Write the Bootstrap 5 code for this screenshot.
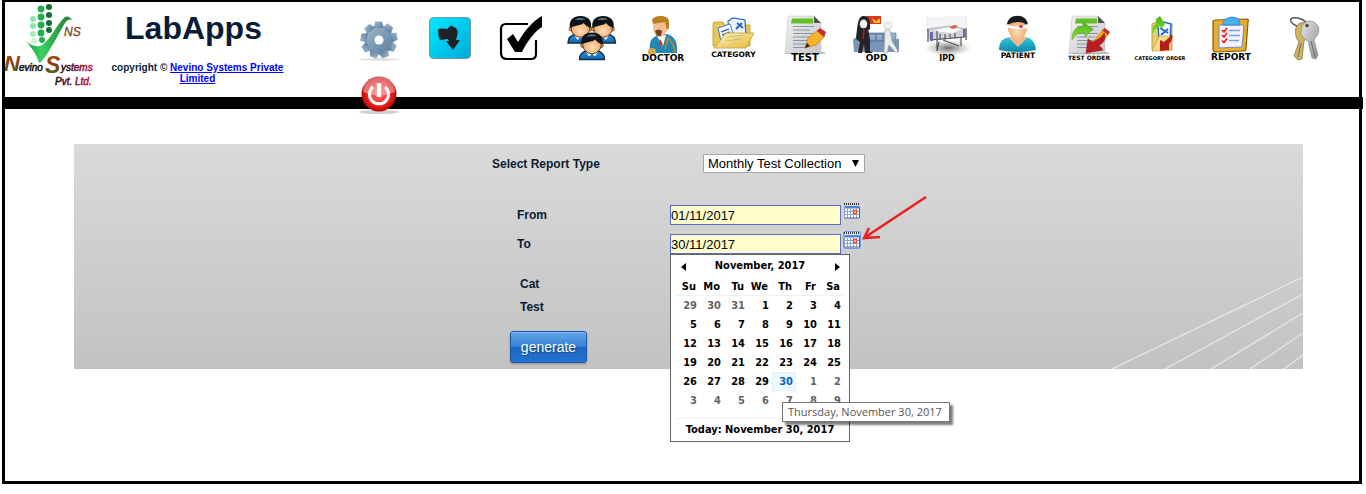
<!DOCTYPE html>
<html lang="en">
<head>
<meta charset="utf-8">
<meta name="viewport" content="width=device-width, initial-scale=1">
<title>LabApps</title>
<link href="https://cdn.jsdelivr.net/npm/bootstrap@5.3.0/dist/css/bootstrap.min.css" rel="stylesheet">
<style>
body{font-family:"Liberation Sans",Arial,sans-serif;font-size:12px;line-height:16px;color:#0a1c35;background:#fff}
.page-frame{margin:0 4px 10px 2px;border:3px solid #000;border-top-width:2px;min-height:calc(100vh - 10px)}
.top-bar{border-bottom:12px solid #000;margin-right:-4px}
.brand-logo{width:92px;height:92px}
.brand-block{width:194px;padding:8px 0 0 7px}
.brand-block h1{font-size:32px;line-height:36px;font-weight:700;margin:0 8px 0 0}
.copyright{font-size:10px;line-height:11px;font-weight:700;margin-top:16px}
.copyright a{color:#00f}
.tool-nav{margin:0 0 -23px 52px}
.tool-nav a{width:71px;height:59px;padding-top:14px;display:block;text-align:center}
.tool-nav svg{width:44px;height:45px;overflow:visible;display:block;margin:0 auto}
.tool-nav text{font-family:"DejaVu Sans",Verdana,sans-serif;font-weight:700;fill:#000;text-anchor:middle}
.report-panel{margin:35px 56px 0 69px;min-height:225px;background:linear-gradient(#dadada,#c2c2c2)}
.panel-rays{width:191px;height:92px;right:0;bottom:0}
.report-form{width:393px;padding-top:10px;font-weight:700}
.form-line{display:grid;grid-template-columns:178px 1fr}
.type-line{grid-template-columns:211px 1fr;align-items:center}
.type-select{width:162px;height:19px;padding:0 18px 0 4px;font-size:13px;line-height:17px;color:#000;border:1px solid #a5a5a5;border-radius:1px;background-color:#fff;background-size:7px 7px;background-position:right 5px center;background-image:url("data:image/svg+xml,%3Csvg xmlns='http://www.w3.org/2000/svg' viewBox='0 0 7 7'%3E%3Cpath d='M0 0h7L3.500 7z'/%3E%3C/svg%3E")}
.date-box{width:171px;height:20px;padding:0;font-size:13px;line-height:18px;color:#000;background:#ffffcd;border:1px solid #5d6cc4;border-radius:0}
.date-box:focus{background:#ffffcd}
.cal-btn{width:16px;height:16px;padding:0;border:0;background:none;margin:-2px 0 0 3px;display:block}
.cal-btn svg{display:block}
.cal-btn.is-open{box-shadow:0 0 0 1px #6f9bea;border-radius:2px;background:#dfe9ff}
.date-label{padding:2px 0 0 25px}
.to-line{margin-top:9px}
.filter-name{padding-left:28px;margin-top:7px}
.filter-first{margin-top:22px}
.btn-generate{margin:16px 0 6px 18px;width:77px;height:32px;padding:0;font-size:14px;color:#fff;border:1px solid #1a58a4;border-radius:3px;background:linear-gradient(#63a4e8,#3583d8 49%,#1c68c0 51%,#2272d0);box-shadow:inset 0 1px 0 #8dbcf0,0 1px 2px rgba(0,0,0,.3);text-shadow:1px 1px 1px #174a86}
.cal-pop{left:0;top:20px;width:180px;height:188px;background:#fff;border:1px solid #646464;padding:2px 5px;font:700 11px/18px "DejaVu Sans Condensed","DejaVu Sans",Tahoma,sans-serif;color:#000;z-index:3}
.cal-pop button{border:0;background:none;padding:0;width:14px;height:19px}
.cal-pop button svg{display:block;margin:auto}
.cal-grid{border-collapse:separate;border-spacing:0;width:168px;table-layout:fixed}
.cal-grid th,.cal-grid td{height:19px;padding:0 2px 0 0;text-align:right;border:1px solid transparent;line-height:17px}
.cal-grid th{height:20px;border-bottom-color:#f0f0f0;padding-right:3px}
.cal-grid .off{color:#646464}
.cal-grid .picked{background:#edf9ff;border-color:#daf2fc;color:#0066cc}
.cal-foot{border-top:1px solid #f0f0f0;margin-top:8px;padding-top:2px}
.day-tip{left:112px;top:168px;height:20px;padding:0 7px 0 5px;border:1px solid #767676;background:#fff;box-shadow:3px 3px 2px rgba(0,0,0,.5);color:#575757;font:400 11px/18px "Open Sans","Segoe UI",sans-serif;white-space:nowrap;z-index:4}
.pointer-arrow{left:191px;top:-38px;width:68px;height:44px}
</style>
</head>
<body>
<svg width="0" height="0" class="position-absolute" aria-hidden="true">
<defs>
<linearGradient id="gGreen" x1="0" x2="1"><stop offset="0" stop-color="#0a9c38"/><stop offset=".35" stop-color="#3fcf60"/><stop offset="1" stop-color="#1d7a35"/></linearGradient>
<linearGradient id="gN" x2="0" y2="1"><stop offset="0" stop-color="#a05a14"/><stop offset=".5" stop-color="#8a3a14"/><stop offset="1" stop-color="#2c7a1c"/></linearGradient>
<linearGradient id="gW" x1="0" x2="1"><stop offset="0" stop-color="#111"/><stop offset="1" stop-color="#c8144a"/></linearGradient>
<linearGradient id="gGear" x2="1" y2="1"><stop offset="0" stop-color="#a3bccf"/><stop offset="1" stop-color="#557b9b"/></linearGradient>
<linearGradient id="gCyan" x2="1" y2="1"><stop offset="0" stop-color="#00eaff"/><stop offset="1" stop-color="#00a9dc"/></linearGradient>
<linearGradient id="gBlue" x2="0" y2="1"><stop offset="0" stop-color="#2b9ae0"/><stop offset="1" stop-color="#1463a8"/></linearGradient>
<radialGradient id="gSkin" cy=".65"><stop offset="0" stop-color="#ffdfba"/><stop offset="1" stop-color="#f0a968"/></radialGradient>
<linearGradient id="gFold" x2="1" y2="1"><stop offset="0" stop-color="#fff3b0"/><stop offset="1" stop-color="#e4bb3c"/></linearGradient>
<linearGradient id="gPaper" x2="1" y2="1"><stop offset="0" stop-color="#f1f1f1"/><stop offset="1" stop-color="#c4c6c8"/></linearGradient>
<linearGradient id="gSofa" x2="0" y2="1"><stop offset="0" stop-color="#9fb9d6"/><stop offset="1" stop-color="#5c7da3"/></linearGradient>
<linearGradient id="gTeal" x2="0" y2="1"><stop offset="0" stop-color="#35c8df"/><stop offset="1" stop-color="#0c87a8"/></linearGradient>
<linearGradient id="gUp" x2="0" y2="1"><stop offset="0" stop-color="#4cb512"/><stop offset="1" stop-color="#8ee03a"/></linearGradient>
<radialGradient id="gRed"><stop offset="0" stop-color="#ff6f6f"/><stop offset=".75" stop-color="#e01c1c"/><stop offset="1" stop-color="#b40808"/></radialGradient>
<linearGradient id="gSilver" x2="1" y2="1"><stop offset="0" stop-color="#e6e6e6"/><stop offset="1" stop-color="#8c8c8c"/></linearGradient>
<radialGradient id="gShade"><stop offset="0" stop-color="#555" stop-opacity=".85"/><stop offset="1" stop-color="#888" stop-opacity="0"/></radialGradient>
<g id="person"><path d="M-12.500 15C-12.500 9-9 7-4 6H4C9 7 12.500 9 12.500 15z" fill="url(#gBlue)" stroke="#0a3050" stroke-width="1.400"/><path d="M-6 7L-3 12L0 9L3 12L6 7z" fill="#fff"/><circle cx="-9.500" cy="1" r="2" fill="#f0a968" stroke="#3a1c08" stroke-width=".6"/><circle cx="9.500" cy="1" r="2" fill="#f0a968" stroke="#3a1c08" stroke-width=".6"/><ellipse rx="9.300" ry="9.300" fill="url(#gSkin)" stroke="#3a1c08" stroke-width=".8"/><path d="M-10.500 0C-12-8-7-12 0-12S12-8 10.500 0C7-1 5-3 3-5C0-2-6-3-10.500 0z" fill="#0b1218"/><path d="M-6-8Q0-12 5-8.500Q0-8-6-8z" fill="#59717f"/></g>
<g id="sheet"><ellipse cx="22" cy="37" rx="21" ry="1.500" fill="#aaa"/><path d="M6 0H31L38 7V35Q38 37 36 37H4Q2 37 2.200 35L5 1z" fill="url(#gPaper)" stroke="#c6c6c6" stroke-width=".6"/><path d="M31 0L38 7H31z" fill="#555"/><path d="M9 2.500H30V7.500H8z" fill="#62bf25"/><g stroke="#8896a4" stroke-width="1.200"><path d="M10 10.500h21M10 14h17M10 17.500h21M10 21h18M10 24.500h17M10 28h18M10 31.500h15"/></g></g>
<g id="cal"><path fill="#fff" d="M.5 3h15v12H.5z"/><path fill="#4f83d8" d="M.5 3h15v2.500H.5z"/><path d="M0 1H16" stroke="#333" stroke-width="2" stroke-dasharray="1 1"/><path d="M.5 3v12.500M3.500 6v9M6.500 6v9M9.500 6v9M12.500 6v9M1 8.500h14M1 11.500h14" fill="none" stroke="#86a5d0"/><path d="M.5 15h15V4" fill="none" stroke="#456798"/><path d="M9.500 7.500h3v3h-3z" fill="#fff" stroke="#e6491d" stroke-width="1.300"/></g>
</defs>
</svg>

<div class="page-frame">
<header class="top-bar d-flex">
  <svg class="brand-logo flex-shrink-0" viewBox="0 0 92 92" role="img" aria-label="Nevino Systems Pvt. Ltd.">
    <g fill="#8de6a8"><circle cx="28" cy="17" r="3"/><circle cx="28" cy="24" r="3"/><circle cx="28" cy="32" r="3" fill="#a5efbb"/><circle cx="29" cy="39" r="3" fill="#c8f5d4"/></g>
    <g fill="#1fae4b"><circle cx="36" cy="7" r="3.400"/><circle cx="36" cy="15" r="3.400"/><circle cx="36" cy="23" r="3.400"/><circle cx="36" cy="31" r="3.400"/><circle cx="37" cy="38" r="3"/></g>
    <g fill="#12702f"><circle cx="44" cy="5" r="3"/><circle cx="44" cy="13" r="3"/><circle cx="44" cy="21" r="3"/><circle cx="44" cy="28" r="3"/></g>
    <path d="M20 38C24 43 30 45 35 44C45 40 50 24 60 15Q64 13 67 18Q63 16 60 21C52 34 46 48 36 60Q34 62 33 58C31 52 27 46 20 38z" fill="url(#gGreen)"/>
    <g font-family="Liberation Sans" font-style="italic">
      <text x="59" y="34" font-size="12" fill="#7a4420" stroke="#7a4420" stroke-width=".3">NS</text>
      <text x="-1" y="69" font-size="22" font-weight="700" fill="url(#gN)">N</text>
      <text x="14" y="69" font-size="10" fill="#111" stroke="#111" stroke-width=".5">evino</text>
      <text x="40" y="71" font-size="23" font-weight="700" fill="url(#gN)">S</text>
      <text x="56" y="69" font-size="10" fill="url(#gW)" stroke="url(#gW)" stroke-width=".5">ystems</text>
      <text x="50" y="83" font-size="10" fill="url(#gW)" stroke="url(#gW)" stroke-width=".5">Pvt. Ltd.</text>
    </g>
  </svg>
  <div class="brand-block text-center flex-shrink-0">
    <h1>LabApps</h1>
    <div class="copyright">copyright © <a href="#">Nevino Systems Private Limited</a></div>
  </div>
  <nav class="tool-nav d-flex flex-wrap flex-grow-1" aria-label="Modules">
    <a href="#" aria-label="Settings"><svg viewBox="0 0 44 45"><ellipse cx="22" cy="43.500" rx="21" ry="1.200" fill="#ddd"/><g transform="translate(22 24)"><g fill="url(#gGear)"><circle r="14.500"/><path d="M-4-18.500L3-18.500L5-12H-5z"/><path d="M-4-18.500L3-18.500L5-12H-5z" transform="rotate(40)"/><path d="M-4-18.500L3-18.500L5-12H-5z" transform="rotate(80)"/><path d="M-4-18.500L3-18.500L5-12H-5z" transform="rotate(120)"/><path d="M-4-18.500L3-18.500L5-12H-5z" transform="rotate(160)"/><path d="M-4-18.500L3-18.500L5-12H-5z" transform="rotate(200)"/><path d="M-4-18.500L3-18.500L5-12H-5z" transform="rotate(240)"/><path d="M-4-18.500L3-18.500L5-12H-5z" transform="rotate(280)"/><path d="M-4-18.500L3-18.500L5-12H-5z" transform="rotate(320)"/></g><circle r="4.500" fill="#fff"/></g></svg></a>
    <a href="#" aria-label="Download"><svg viewBox="0 0 44 45"><rect x="1.500" y="1.500" width="41" height="41" rx="4" fill="url(#gCyan)" stroke="#6c9aa4"/><path d="M10 14Q10 12 14 12.500L19 13L23 9.500L28 12Q30 14 29.500 18L28 24H32L25 34L18 25H21L20 23L12 24Q10 20 10 14z" fill="#1c2226"/></svg></a>
    <a href="#" aria-label="Select"><svg viewBox="0 0 44 45"><path d="M29 8H7Q2 8 2 13V37Q2 43 8 43H32Q37 43 37 38V24" fill="none" stroke="#000" stroke-width="2.200"/><path d="M8 23L14 18L19 26C26 14 34 5 43 0V11C35 16 28 26 23 36H16z" fill="#000"/></svg></a>
    <a href="#" aria-label="Users"><svg viewBox="0 0 44 45"><use href="#person" x="10.500" y="12"/><use href="#person" x="33" y="12"/><use href="#person" x="22" y="28.500"/></svg></a>
    <a href="#"><svg viewBox="0 0 44 45"><path d="M9 36C8 25 10 20 20 19L26 18C34 20 37 27 36 37H10z" fill="#2189b8"/><path d="M16 20L22 30L25 19z" fill="#fff"/><path d="M19 23L18 31L22 28z" fill="#d3392a"/><path d="M12 6V13C13 20 17 21 19 21C24 20 27 15 27 8L24 3H14z" fill="#f3bf90"/><path d="M11 4C13-1 27-2 28 5V12L26 14L24 6L12 8z" fill="#b8801e"/><path d="M14 15Q18 12 21 15L20 20H16z" fill="#77401d"/><path d="M26 21C31 26 34 30 34 36M27 22L24 33" fill="none" stroke="#c48a22" stroke-width="1.500"/><circle cx="11" cy="36" r="4" fill="#d4a94c"/><text x="22" y="45" font-size="9">DOCTOR</text></svg></a>
    <a href="#"><svg viewBox="0 0 44 45"><path d="M1 30V8Q1 6 3 6H11L13 9H38V30z" fill="#e9c956" stroke="#b08d2a" stroke-width=".7"/><path d="M16 5L21 2L33 4L34 20L18 24z" fill="#eaf3ff" stroke="#2c66c0" stroke-width="1.200"/><path d="M6 12L18 8L24 27L10 30z" fill="#fff" stroke="#3a78cc"/><path d="M9 16L17 13M10 19L18 16" stroke="#3a78cc" stroke-width="1.500"/><path d="M25 7L31 12M24 13L30 7" stroke="#2c66c0" stroke-width="2"/><path d="M2 32L14 17H42L34 32z" fill="url(#gFold)" fill-opacity=".93" stroke="#c69c2c" stroke-width=".8"/><path d="M15 21L32 19M13 25L30 23" stroke="#d0bc70"/><text x="21.500" y="41" font-size="7.500">CATEGORY</text></svg></a>
    <a href="#"><svg viewBox="0 0 44 45"><use href="#sheet"/><path d="M22 32L25 22L35 14L42 20L33 29z" fill="#f6b22b" stroke="#b57611" stroke-width=".6"/><path d="M34 15L37 12L43 16L41 21z" fill="#c62a2a"/><path d="M22 32L24 27L27 30z" fill="#222"/><text x="22" y="45" font-size="10">TEST</text></svg></a>
    <a href="#"><svg viewBox="0 0 44 45"><path d="M12 0H27V8H15z" fill="#d83a1c"/><path d="M18 2l4 3 4-3v5h-6z" fill="#f0bb23"/><path d="M3 17H42V34H2z" fill="url(#gSofa)" stroke="#59789b" stroke-width=".7"/><path d="M-1 24Q1 20 4 23V28H42Q42 21 45 23V36H0z" fill="#7895b7"/><path d="M11 18h24M12 25h20M22 18v7M29 18v7" stroke="#4a698e"/><path d="M3 14Q4-1 10 0Q17 0 16 13Q10 18 3 14z" fill="#231f20"/><ellipse cx="9.500" cy="8" rx="3.800" ry="4.500" fill="#eee"/><path d="M3 13L14 12L16 24V35L19 37H11L10 28L8 37H4L6 26L2 23z" fill="#252528"/><path d="M10 13L9 23" stroke="#b71d1d" stroke-width="1.500"/><circle cx="34" cy="9.500" r="3.700" fill="#f3f3f3" stroke="#aaa" stroke-width=".5"/><path d="M31 14H36L38 25L44 35L42 37L35 29L33 37H30z" fill="#ececec" stroke="#999" stroke-width=".6"/><text x="22.500" y="45" font-size="9">OPD</text></svg></a>
    <a href="#"><svg viewBox="0 0 44 45"><ellipse cx="23" cy="32" rx="23" ry="8" fill="url(#gShade)"/><path d="M2 1V14L40 12L42 0" fill="#f4f4f6" stroke="#ddd" stroke-width=".6"/><path d="M2 13L25 10L40 13L42 21L5 24z" fill="#cfd3d8" stroke="#888" stroke-width=".5"/><path d="M8 15L24 11L36 13L28 17z" fill="#fff"/><path d="M3 13V26M12 15V34M41 12V24M5 24L39 21M14 26L12 35M18 24L34 30M36 22V30M15 18V24M20 18V24M25 18V23M30 17V22" stroke="#555" stroke-width="1.200" fill="none"/><path d="M24 12Q29 7 33 10L29 13z" fill="#c96a4c"/><path d="M5 16h3v9H5zM38 13h2v8h-2z" fill="#6a68a8"/><text x="22" y="45" font-size="8">IPD</text></svg></a>
    <a href="#"><svg viewBox="0 0 44 45"><path d="M3 34C3 25 7 22 15 21H29C36 22 39 26 40 34Q22 38 3 34z" fill="url(#gTeal)"/><path d="M13 22L22 31L31 22L27 19H17z" fill="#f2b98b"/><ellipse cx="21.500" cy="12" rx="9.500" ry="11" fill="url(#gSkin)"/><path d="M11 9C11-3 33-4 32 11L28 7Q20 4 11 9z" fill="#19191b"/><path d="M10 8Q20 13 32 8V12Q20 15 10 11z" fill="#fff" stroke="#d9d9d9" stroke-width=".4"/><circle cx="25" cy="10.500" r="1.800" fill="#d63838"/><text x="22" y="42" font-size="7.500">PATIENT</text></svg></a>
    <a href="#"><svg viewBox="0 0 44 45"><use href="#sheet"/><path d="M27 24L35 14L42 18L34 29z" fill="#f0a020"/><path d="M35 14L38 12L43 16L41 19z" fill="#c2302a"/><path d="M5 24C5 14 10 10 16 11V6L26 13L18 21V17C13 16 9 18 5 24z" fill="url(#gUp)" stroke="#4f9c1c" stroke-width=".5"/><path d="M37 17C40 23 36 27 32 29L36 34L19 37L21 23L25 26C30 24 35 22 37 17z" fill="#b81c20" stroke="#8a1010" stroke-width=".5"/><text x="22" y="44" font-size="6">TEST ORDER</text></svg></a>
    <a href="#"><svg viewBox="0 0 44 45"><path d="M14 34V8L18 6L34 8V34z" fill="#ecd069" stroke="#a4832a" stroke-width=".7"/><path d="M20 9L26 6L33 8L32 22L21 25z" fill="#eef6ff" stroke="#2b66c4" stroke-width="1.400"/><path d="M22 12l8 5M23 19l7-6" stroke="#2b66c4" stroke-width="2"/><path d="M14 35L21 20H35L30 35z" fill="#f3dc84" stroke="#9d7c20" stroke-width=".6" stroke-dasharray="2 1"/><path d="M14 20Q13 10 18 8L18 3L22 0L27 8L23 13L22 10Q17 12 14 20z" fill="url(#gUp)"/><path d="M34 18Q35 24 31 28L31 34L22 35L22 24L26 26Q31 22 34 18z" fill="#b81c20"/><text x="22" y="44" font-size="5">CATEGORY ORDER</text></svg></a>
    <a href="#"><svg viewBox="0 0 44 45"><path d="M6 4L38 3Q40 3 39 6L37 33Q37 35 34 35L7 36Q4 36 4 33L4 6Q4 4 6 4z" fill="#e9ae29" stroke="#8a5a10" stroke-width="1.200"/><path d="M10 9H35L33 31L10 32z" fill="#f5f3ff" stroke="#6e88c8"/><path d="M14 9Q14 3 19 2Q22 0 28 2Q31 3 30 9z" fill="#48b2f2" stroke="#2a7cc0" stroke-width=".8"/><path d="M20 14.500H31M20 19.500H31M20 24.500H30" stroke="#7ba0d8" stroke-width="1.300"/><path d="M13 14l2 2 3-4M13 19l2 2 3-4M13 24.500l2 2 3-4" fill="none" stroke="#f01820" stroke-width="1.700"/><text x="22" y="44" font-size="9">REPORT</text></svg></a>
    <a href="#" aria-label="Change password"><svg viewBox="0 0 44 45"><ellipse cx="19" cy="6.500" rx="9" ry="4" transform="rotate(20 19 6.500)" fill="none" stroke="#555" stroke-width="1.500"/><path d="M16 11Q21 4 27 8L29 18L24 25L22 43L18 44L14 40L19 26Q14 20 16 11z" fill="#d2b45c" stroke="#7b6a35" stroke-width=".7"/><path d="M22 10Q27 3 34 6Q41 10 38 18Q36 21 34 24L38 39L36 43L32 42L28 25Q21 22 21 16z" fill="url(#gSilver)" stroke="#8b8b8b" stroke-width=".7"/><circle cx="27" cy="9.500" r="1.700" fill="#444"/><path d="M31 25L35 41M21 27L18 41" stroke="#777" stroke-width="1.200"/></svg></a>
    <a href="#" aria-label="Log out"><svg viewBox="0 0 44 45" class="position-relative"><ellipse cx="22" cy="37" rx="20" ry="2" fill="#777" fill-opacity=".35"/><circle cx="22" cy="19" r="17.500" fill="url(#gRed)"/><path d="M6 17C6-4 38-4 38 17Q22 24 6 17z" fill="#fff" fill-opacity=".38"/><path d="M16 12A9.500 9.500 0 1 0 28 12" fill="none" stroke="#fff" stroke-width="3"/><path d="M19.500 8H24.500V22H19.500z" fill="#fff" stroke="#d66" stroke-width=".4"/></svg></a>
  </nav>
</header>

<main class="report-panel position-relative">
  <svg class="panel-rays position-absolute" viewBox="0 0 191 92" aria-hidden="true"><path d="M0 92L191 0M53 92L191 17M99 92L191 36M138 92L191 56M172 92L191 78" stroke="#e6e6e6" stroke-width="1.300" fill="none"/></svg>
  <form class="report-form mx-auto position-relative">
    <div class="form-line type-line mb-4">
      <label for="rtype">Select Report Type</label>
      <select id="rtype" class="form-select type-select"><option>Monthly Test Collection</option></select>
    </div>
    <div class="form-line pt-2">
      <label for="from" class="date-label">From</label>
      <div class="d-flex"><input id="from" class="form-control date-box" value="01/11/2017"><button type="button" class="cal-btn" aria-label="Pick start date"><svg width="16" height="16"><use href="#cal"/></svg></button></div>
    </div>
    <div class="form-line to-line">
      <label for="to" class="date-label">To</label>
      <div class="d-flex position-relative"><input id="to" class="form-control date-box" value="30/11/2017"><button type="button" class="cal-btn is-open" aria-label="Pick end date"><svg width="16" height="16"><use href="#cal"/></svg></button>
        <div class="cal-pop position-absolute">
          <div class="d-flex justify-content-between"><button type="button" aria-label="Previous month"><svg width="5" height="8"><path d="M5 0V8L0 4z"/></svg></button><span>November, 2017</span><button type="button" aria-label="Next month"><svg width="5" height="8"><path d="M0 0V8L5 4z"/></svg></button></div>
          <table class="cal-grid">
            <thead><tr><th>Su</th><th>Mo</th><th>Tu</th><th>We</th><th>Th</th><th>Fr</th><th>Sa</th></tr></thead>
            <tbody>
            <tr><td class="off">29</td><td class="off">30</td><td class="off">31</td><td>1</td><td>2</td><td>3</td><td>4</td></tr>
            <tr><td>5</td><td>6</td><td>7</td><td>8</td><td>9</td><td>10</td><td>11</td></tr>
            <tr><td>12</td><td>13</td><td>14</td><td>15</td><td>16</td><td>17</td><td>18</td></tr>
            <tr><td>19</td><td>20</td><td>21</td><td>22</td><td>23</td><td>24</td><td>25</td></tr>
            <tr><td>26</td><td>27</td><td>28</td><td>29</td><td class="picked">30</td><td class="off">1</td><td class="off">2</td></tr>
            <tr><td class="off">3</td><td class="off">4</td><td class="off">5</td><td class="off">6</td><td class="off">7</td><td class="off">8</td><td class="off">9</td></tr>
            </tbody>
          </table>
          <div class="cal-foot text-center">Today: November 30, 2017</div>
        </div>
        <div class="day-tip position-absolute" role="tooltip">Thursday, November 30, 2017</div>
        <svg class="pointer-arrow position-absolute" viewBox="0 0 68 44" aria-hidden="true"><path d="M65 1L3 42M8 32L3 42L19 41" fill="none" stroke="#ee1c24" stroke-width="2.500"/></svg>
      </div>
    </div>
    <div class="filter-name filter-first">Cat</div>
    <div class="filter-name">Test</div>
    <button type="button" class="btn btn-generate">generate</button>
  </form>
</main>
</div>
<script src="https://cdn.jsdelivr.net/npm/bootstrap@5.3.0/dist/js/bootstrap.bundle.min.js"></script>
</body>
</html>
